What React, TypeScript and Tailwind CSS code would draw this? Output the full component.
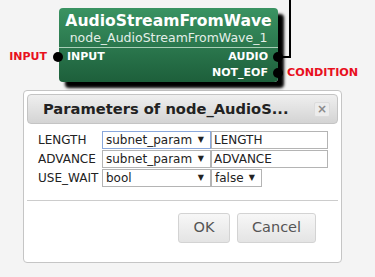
import React from "react";

const Dot = ({ className }: { className: string }) => (
  <div className={"absolute w-[10px] h-[10px] rounded-full bg-black " + className} />
);

const Select = ({ value, width, focused }: { value: string; width: string; focused?: boolean }) => (
  <div
    className={
      "h-[18px] flex items-center justify-between pl-[3px] pr-[6px] border bg-white " +
      width +
      (focused ? " border-[#8aa8dc]" : " border-[#b4b4b4]")
    }
  >
    <span>{value}</span>
    <span className="text-[8px]">▼</span>
  </div>
);

const TextBox = ({ value }: { value: string }) => (
  <div className="h-[18px] w-[117px] border border-[#b4b4b4] bg-white pl-[2px] leading-[16px]">{value}</div>
);

const App = () => {
  return (
    <div className="relative w-[375px] h-[277px] overflow-hidden bg-[#f4f4f4] pt-[8px] font-['DejaVu_Sans',sans-serif]">
      {/* wire from AUDIO */}
      <svg className="absolute left-0 top-0" width="375" height="277">
        <path d="M282 57 H290 V0" fill="none" stroke="#000" strokeWidth="2" />
      </svg>

      {/* node */}
      <div className="relative ml-[59px] w-[219px] h-[74px] rounded-[4px] bg-linear-to-b from-[#3a9362] to-[#1d5f3b] shadow-[6px_6px_3px_#000] text-white">
        <div className="h-[40px] border-b border-[#a9cfb7] flex flex-col items-center">
          <div className="pt-[4px] text-[15.6px] leading-[18px] font-bold">AudioStreamFromWave</div>
          <div className="text-[12.5px] leading-[16px] text-[#e4efe8]">node_AudioStreamFromWave_1</div>
        </div>
        <div className="flex justify-between pl-[8px] pr-[10px] h-[16px] text-[11px] leading-[17px] font-bold">
          <span>INPUT</span>
          <span>AUDIO</span>
        </div>
        <div className="flex justify-end pr-[10px] h-[16px] text-[11px] leading-[17px] font-bold">
          <span>NOT_EOF</span>
        </div>

        <Dot className="left-[-6px] top-[44px]" />
        <Dot className="left-[214px] top-[44px]" />
        <Dot className="left-[214px] top-[60px]" />

        <div className="absolute right-full mr-[12px] top-[41px] text-[11px] leading-[16px] font-bold text-[#e8101e]">
          INPUT
        </div>
        <div className="absolute left-[228px] top-[57px] text-[11.2px] leading-[16px] font-bold text-[#e8101e]">
          CONDITION
        </div>
      </div>

      {/* dialog */}
      <div className="ml-[23px] mt-[8px] w-[319px] h-[173px] rounded-[4px] border border-[#c5c5c5] bg-white p-[3px] flex flex-col text-[12px] text-[#222]">
        <div className="h-[30px] flex items-center justify-between pl-[15px] pr-[7px] rounded-[4px] border border-[#c4c4c4] bg-linear-to-b from-[#efefef] to-[#d4d4d4]">
          <span className="text-[14.7px] font-bold whitespace-nowrap text-[#222]">Parameters of node_AudioS...</span>
          <div className="w-[16px] h-[15px] flex items-center justify-center rounded-[2px] bg-[#ececec] border border-[#dcdcdc] text-[12px] font-bold leading-none text-[#8a8a8a]">
            ×
          </div>
        </div>

        <div className="pl-[11px] pt-[7px] flex flex-col gap-[1px] leading-[18px]">
          <div className="flex h-[18px]">
            <span className="w-[64px]">LENGTH</span>
            <Select value="subnet_param" width="w-[109px]" focused />
            <TextBox value="LENGTH" />
          </div>
          <div className="flex h-[18px]">
            <span className="w-[64px]">ADVANCE</span>
            <Select value="subnet_param" width="w-[109px]" />
            <TextBox value="ADVANCE" />
          </div>
          <div className="flex h-[18px]">
            <span className="w-[64px] whitespace-nowrap">USE_WAIT</span>
            <Select value="bool" width="w-[109px]" />
            <Select value="false" width="w-[51px]" />
          </div>
        </div>

        <div className="mt-[13px] border-t border-[#cccccc] pt-[12px] pr-[22px] flex justify-end gap-[7px]">
          <button className="w-[52px] h-[30px] rounded-[3px] border border-[#d3d3d3] bg-linear-to-b from-[#f7f7f7] to-[#e4e4e4] text-[14.5px] text-[#555]">
            OK
          </button>
          <button className="w-[79px] h-[30px] rounded-[3px] border border-[#d3d3d3] bg-linear-to-b from-[#f7f7f7] to-[#e4e4e4] text-[14.5px] text-[#555]">
            Cancel
          </button>
        </div>
      </div>
    </div>
  );
};

export default App;
